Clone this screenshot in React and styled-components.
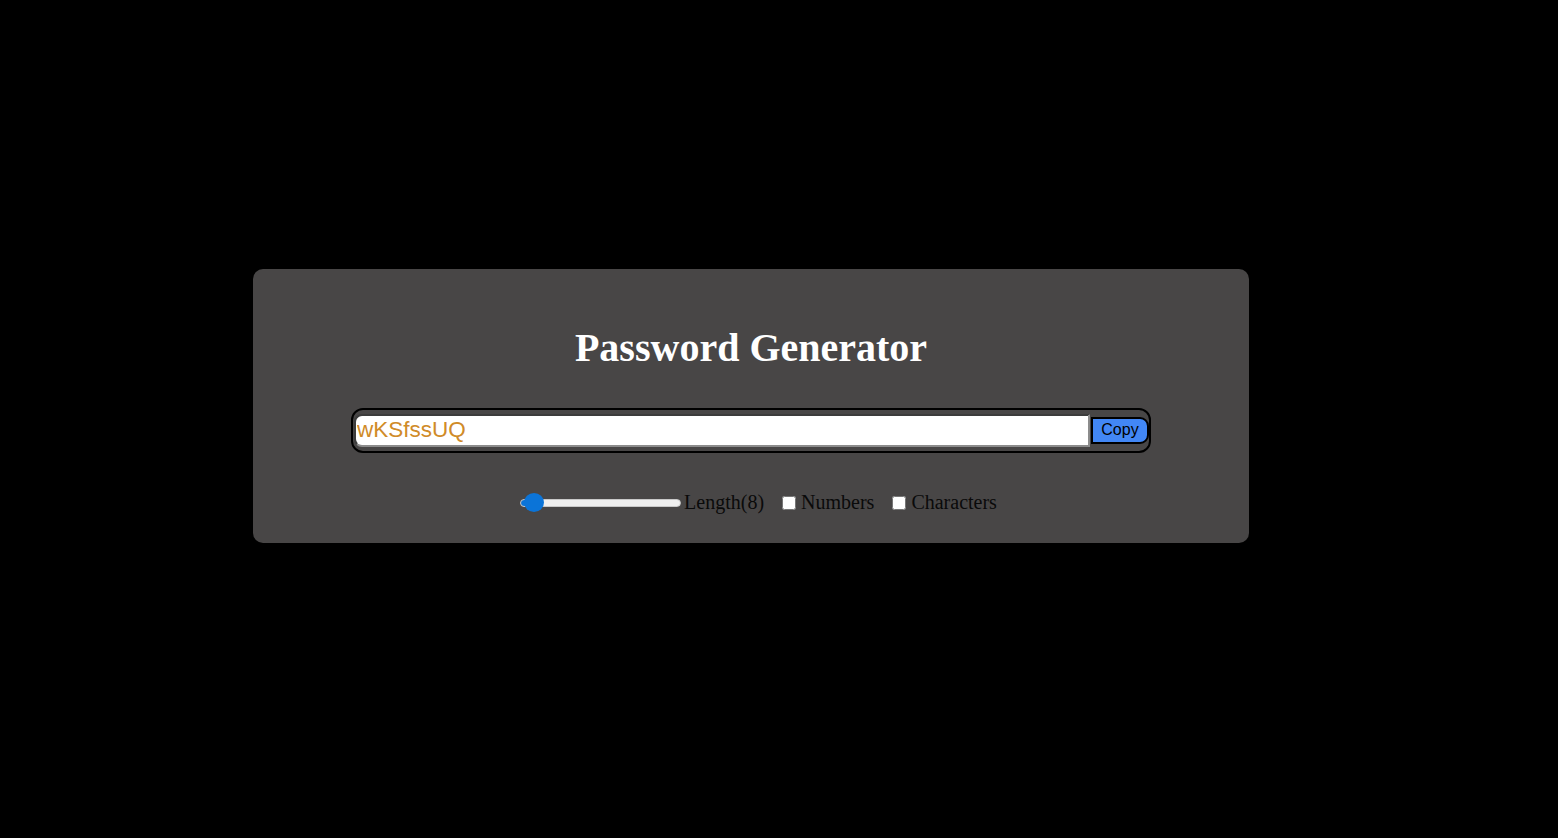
import React, { useState } from "react";
import styled, { createGlobalStyle } from "styled-components";

const Global = createGlobalStyle`
  html, body { margin: 0; padding: 0; background: #000; }
  body { font-family: "Liberation Serif", "Times New Roman", serif; }
  #root { min-height: 100vh; }
`;

const Page = styled.div`
  min-height: 100vh;
  background: #000;
  padding-top: 269px;
  padding-left: 253px;
  box-sizing: border-box;
`;

const Card = styled.div`
  width: 996px;
  background: #484646;
  border-radius: 10px;
  padding: 56px 0 29px;
  box-sizing: border-box;
  display: flex;
  flex-direction: column;
  align-items: center;
`;

const Title = styled.h1`
  margin: 0 0 37px;
  font-family: "Liberation Serif", "Times New Roman", serif;
  font-weight: bold;
  font-size: 40px;
  line-height: 46px;
  color: #fff;
  text-align: center;
`;

const InputGroup = styled.div`
  width: 800px;
  height: 45px;
  box-sizing: border-box;
  border: 2px solid #000;
  border-radius: 12px;
  display: flex;
  align-items: center;
  padding-left: 1px;
`;

const PasswordField = styled.input`
  flex: 1;
  height: 33px;
  box-sizing: border-box;
  margin: 0;
  padding: 0 0 2px 1px;
  border-width: 2px;
  border-style: solid;
  border-color: #3c3c3c #8c8c8c #8c8c8c #3c3c3c;
  border-radius: 8px 0 0 8px;
  background: #fff;
  color: #d08b28;
  font-family: "Liberation Sans", Arial, sans-serif;
  font-size: 22.5px;
  outline: none;
`;

const CopyButton = styled.button`
  width: 58px;
  height: 27px;
  box-sizing: border-box;
  margin: 0 0 0 1px;
  padding: 0 0 1px;
  border: 2px solid #000;
  border-radius: 0 9px 9px 0;
  background: #4287f5;
  color: #000;
  font-family: "Liberation Sans", Arial, sans-serif;
  font-size: 16px;
  cursor: pointer;
`;

const Controls = styled.div`
  margin-top: 38px;
  display: flex;
  align-items: center;
  gap: 18px;
  padding-left: 15px;
  font-size: 20px;
  color: #000;
`;

const Control = styled.div`
  display: flex;
  align-items: center;
  gap: ${(p) => p.$gap || 4}px;
`;

const Label = styled.label`
  font-family: "Liberation Serif", "Times New Roman", serif;
  font-size: 20px;
  line-height: 23px;
  color: #0a0a0a;
`;

const Range = styled.input`
  -webkit-appearance: none;
  appearance: none;
  width: 161px;
  height: 20px;
  margin: 0;
  background: transparent;
  cursor: pointer;

  &::-webkit-slider-runnable-track {
    height: 8px;
    border-radius: 4px;
    background: linear-gradient(to right, #0b74d8 0 10px, #efefef 10px);
    border: 1px solid #c9c9c9;
  }
  &::-webkit-slider-thumb {
    -webkit-appearance: none;
    width: 20px;
    height: 19px;
    border-radius: 50%;
    background: #0b74d8;
    border: none;
    margin-top: -6.5px;
  }
`;

const Check = styled.input`
  width: 14px;
  height: 14px;
  margin: 0;
`;

export default function App() {
  const [length, setLength] = useState(8);
  const [numbers, setNumbers] = useState(false);
  const [chars, setChars] = useState(false);

  return (
    <>
      <Global />
      <Page>
        <Card>
          <Title>Password Generator</Title>
          <InputGroup>
            <PasswordField type="text" value="wKSfssUQ" readOnly placeholder="Password" />
            <CopyButton>Copy</CopyButton>
          </InputGroup>
          <Controls>
            <Control $gap={3}>
              <Range
                type="range"
                min={6}
                max={100}
                value={length}
                onChange={(e) => setLength(Number(e.target.value))}
              />
              <Label>Length({length})</Label>
            </Control>
            <Control $gap={5}>
              <Check
                type="checkbox"
                id="numbers"
                checked={numbers}
                onChange={() => setNumbers(!numbers)}
              />
              <Label htmlFor="numbers">Numbers</Label>
            </Control>
            <Control $gap={5}>
              <Check
                type="checkbox"
                id="chars"
                checked={chars}
                onChange={() => setChars(!chars)}
              />
              <Label htmlFor="chars">Characters</Label>
            </Control>
          </Controls>
        </Card>
      </Page>
    </>
  );
}
